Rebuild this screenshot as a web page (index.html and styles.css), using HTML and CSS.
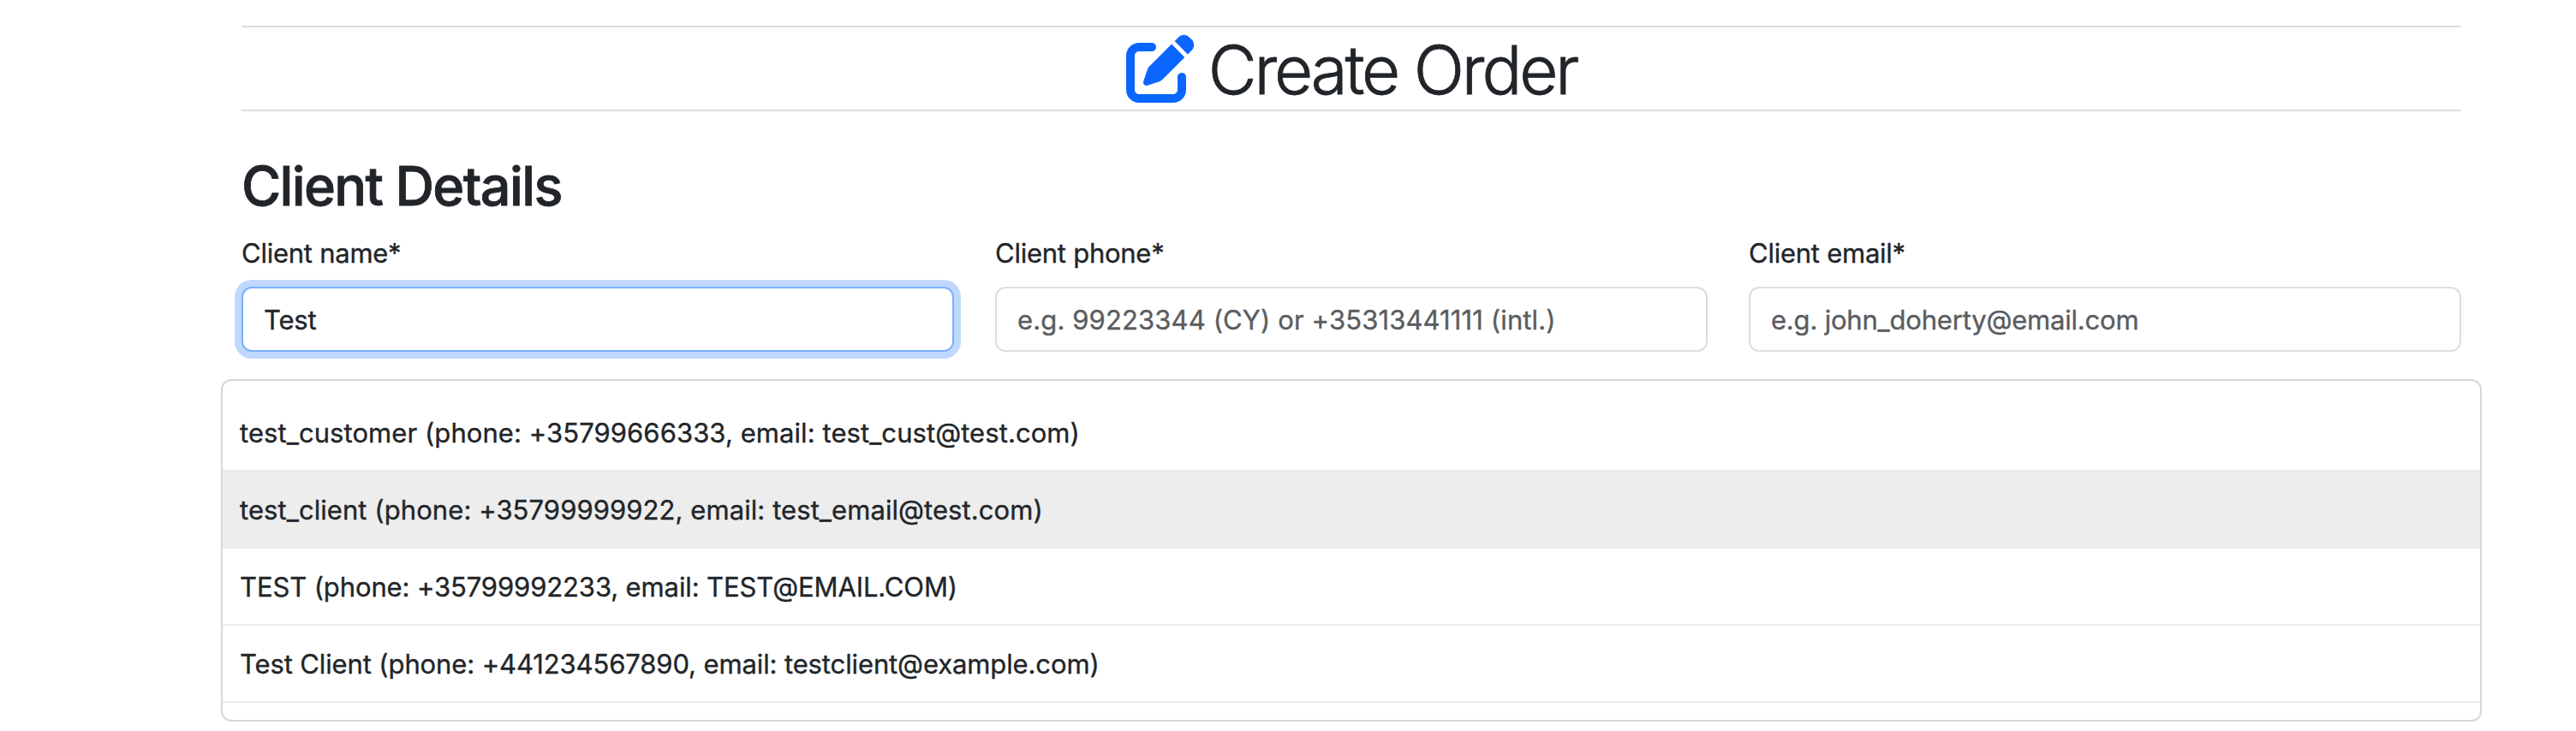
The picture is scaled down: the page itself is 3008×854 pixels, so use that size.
FILE: index.html
```html
<!DOCTYPE html>
<html lang="en">
<head>
<meta charset="utf-8">
<title>Create Order</title>
<link rel="stylesheet" href="styles.css">
</head>
<body>
<main class="container">
  <header class="page-header">
    <svg class="page-icon" viewBox="0 0 512 512" aria-hidden="true"><path fill="currentColor" d="M471.6 21.7c-21.9-21.9-57.3-21.9-79.2 0L362.3 51.7l97.9 97.9 30.1-30.1c21.9-21.9 21.9-57.3 0-79.2L471.6 21.7zm-299.2 220c-6.1 6.1-10.8 13.6-13.5 21.9l-29.6 88.8c-2.9 8.6-.6 18.1 5.8 24.6s15.9 8.7 24.6 5.8l88.8-29.6c8.2-2.7 15.7-7.4 21.9-13.5L437.7 172.3 339.7 74.3 172.4 241.7zM96 64C43 64 0 107 0 160V416c0 53 43 96 96 96H352c53 0 96-43 96-96V320c0-17.7-14.3-32-32-32s-32 14.3-32 32v96c0 17.7-14.3 32-32 32H96c-17.7 0-32-14.3-32-32V160c0-17.7 14.3-32 32-32h96c17.7 0 32-14.3 32-32s-14.3-32-32-32H96z"/></svg>
    <h1 class="page-title">Create Order</h1>
  </header>
  <h2 class="section-title">Client Details</h2>
  <form class="fields">
    <div class="field">
      <label class="label" for="name">Client name*</label>
      <input class="input input-focused" id="name" type="text" value="Test">
    </div>
    <div class="field">
      <label class="label" for="phone">Client phone*</label>
      <input class="input input-phone" id="phone" type="text" placeholder="e.g. 99223344 (CY) or +35313441111 (intl.)">
    </div>
    <div class="field">
      <label class="label" for="email">Client email*</label>
      <input class="input" id="email" type="text" placeholder="e.g. john_doherty@email.com">
    </div>
  </form>
  <ul class="results">
    <li class="result"><span>test_customer (phone: +35799666333, email: test_cust@test.com)</span></li>
    <li class="result result-active"><span>test_client (phone: +35799999922, email: test_email@test.com)</span></li>
    <li class="result result-tight"><span>TEST (phone: +35799992233, email: TEST@EMAIL.COM)</span></li>
    <li class="result result-tight"><span>Test Client (phone: +441234567890, email: testclient@example.com)</span></li>
  </ul>
</main>
</body>
</html>
```
FILE: styles.css
```css
* {
  box-sizing: border-box;
}

body {
  margin: 0;
  background: #fff;
  color: #212529;
  font-family: Inter, "Liberation Sans", sans-serif;
  font-size: 31px;
  font-weight: 400;
  line-height: 48px;
  -webkit-text-stroke: 0.35px currentColor;
}

.container {
  width: 2592px;
  margin-left: 282px;
  padding-top: 30px;
}

.page-header {
  display: flex;
  justify-content: center;
  align-items: center;
  gap: 16px;
  height: 100px;
  border-top: 2px solid #d9dfe3;
  border-bottom: 2px solid #d9dfe3;
}

.page-icon {
  width: 80px;
  height: 80px;
  color: #0a66ff;
}

.page-title {
  margin: 0;
  padding-top: 3px;
  font-size: 78px;
  font-weight: 300;
  line-height: 93px;
  letter-spacing: -3.15px;
  -webkit-text-stroke-width: 0.8px;
}

.section-title {
  margin: 48px 0 16px;
  padding-top: 2px;
  font-size: 63px;
  font-weight: 500;
  line-height: 75px;
  letter-spacing: -1.65px;
  -webkit-text-stroke-width: 0.8px;
}

.fields {
  display: grid;
  grid-template-columns: repeat(3, 1fr);
  gap: 48px;
}

.field {
  display: flex;
  flex-direction: column;
  gap: 16px;
}

.label {
  height: 48px;
  padding-top: 1px;
  letter-spacing: -0.25px;
}

.input {
  width: 100%;
  height: 76px;
  padding: 1px 24px 0;
  border: 2px solid #d9dfe3;
  border-radius: 12px;
  outline: 0;
  background: #fff;
  color: #212529;
  font: inherit;
  letter-spacing: -0.2px;
}

.input::placeholder {
  color: #595c5f;
  opacity: 1;
}

.input-phone {
  letter-spacing: 0.12px;
}

.input-focused {
  border-color: #7ab0ff;
  box-shadow: 0 0 0 8px #c0d8ff;
}

.results {
  margin: 32px -24px 0;
  padding: 16px 0 20px;
  border: 2px solid #d7d7d7;
  border-radius: 12px;
  list-style: none;
}

.result {
  height: 90px;
  padding: 21px 20px 19px;
  border-bottom: 2px solid #ebebeb;
  letter-spacing: 0.07px;
}

.result-active {
  background: #ededed;
}

.result-tight {
  letter-spacing: -0.12px;
}
```
